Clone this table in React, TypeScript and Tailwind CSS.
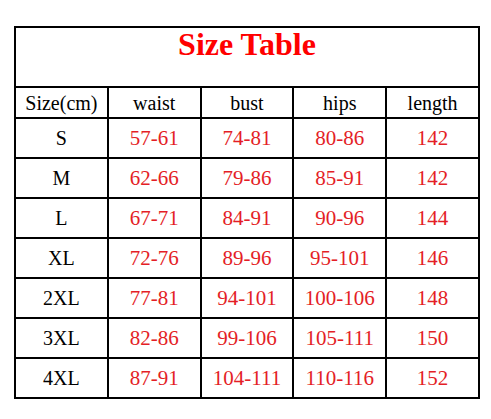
const rows = [
  ["S", "57-61", "74-81", "80-86", "142"],
  ["M", "62-66", "79-86", "85-91", "142"],
  ["L", "67-71", "84-91", "90-96", "144"],
  ["XL", "72-76", "89-96", "95-101", "146"],
  ["2XL", "77-81", "94-101", "100-106", "148"],
  ["3XL", "82-86", "99-106", "105-111", "150"],
  ["4XL", "87-91", "104-111", "110-116", "152"],
]

const headers = ["Size(cm)", "waist", "bust", "hips", "length"]

export default function App() {
  return (
    <div className="w-[491px] h-[419px] bg-white pt-[26px] pl-[14px] font-['Liberation_Serif',serif]">
      <table className="table-fixed border-collapse w-[466px] border-2 border-black">
        <tbody>
          {/* Title */}
          <tr className="h-[60px]">
            <td
              colSpan={5}
              className="border-2 border-black align-top text-center text-[32px] leading-[32px] font-bold text-[#ff0000] pt-0"
            >
              Size Table
            </td>
          </tr>

          {/* Header */}
          <tr className="h-[31px]">
            {headers.map((h) => (
              <td key={h} className="border-2 border-black text-center align-middle text-[20px] leading-none text-black">
                {h}
              </td>
            ))}
          </tr>

          {rows.map((row) => (
            <tr key={row[0]} className="h-[40px]">
              {row.map((cell, i) => (
                <td
                  key={i}
                  className={`border-2 border-black text-center align-middle leading-none ${
                    i === 0 ? 'text-[20px] text-black' : 'text-[21px] text-[#e41e26]'
                  }`}
                >
                  {cell}
                </td>
              ))}
            </tr>
          ))}
        </tbody>
      </table>
    </div>
  )
}
